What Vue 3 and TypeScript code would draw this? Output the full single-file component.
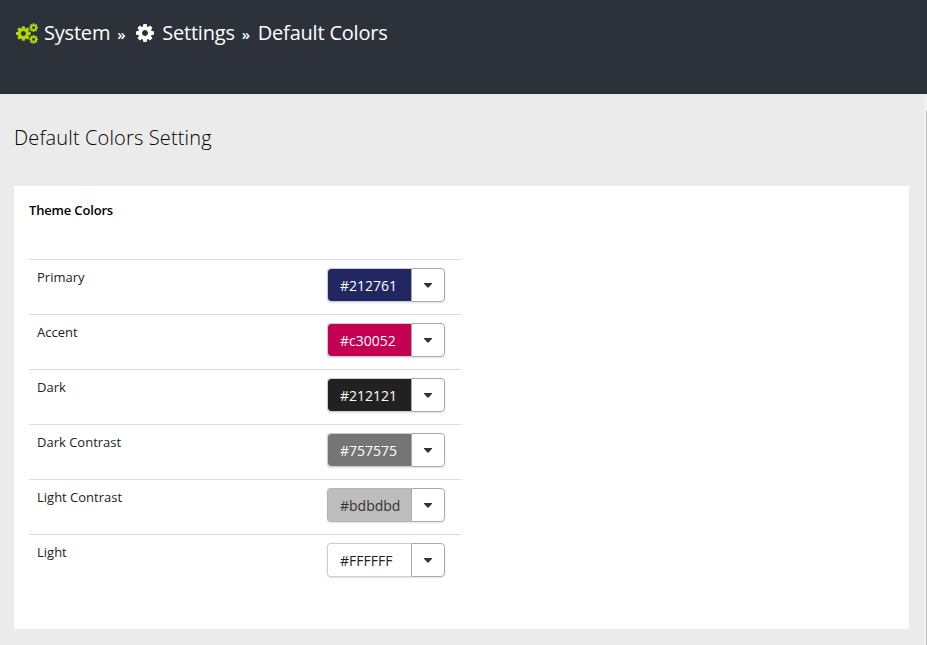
<script setup lang="ts">
interface ThemeColor {
  label: string
  value: string
  tone: string
}

const colors: ThemeColor[] = [
  { label: 'Primary', value: '#212761', tone: 'primary' },
  { label: 'Accent', value: '#c30052', tone: 'accent' },
  { label: 'Dark', value: '#212121', tone: 'dark' },
  { label: 'Dark Contrast', value: '#757575', tone: 'dark-contrast' },
  { label: 'Light Contrast', value: '#bdbdbd', tone: 'light-contrast' },
  { label: 'Light', value: '#FFFFFF', tone: 'light' },
]

const cog =
  'M1024 640q0 106-75 181t-181 75-181-75-75-181 75-181 181-75 181 75 75 181zm512-109v222q0 12-8 23t-20 13l-185 28q-19 54-39 91 35 50 107 138 10 12 10 25t-9 23q-27 37-99 108t-94 71q-12 0-26-9l-138-108q-44 23-91 38-16 136-29 186-7 28-36 28h-222q-14 0-24.5-8.5t-11.5-21.5l-28-184q-49-16-90-37l-141 107q-10 9-25 9-14 0-25-11-126-114-165-168-7-10-7-23 0-12 8-23 15-21 51-66.5t54-70.5q-27-50-41-99l-183-27q-13-2-21-12.5t-8-23.5v-222q0-12 8-23t19-13l186-28q14-46 39-92-40-57-107-138-10-12-10-24 0-10 9-23 26-36 98.5-107.5t94.5-71.5q13 0 26 10l138 107q44-23 91-38 16-136 29-186 7-28 36-28h222q14 0 24.5 8.5t11.5 21.5l28 184q49 16 90 37l142-107q9-9 24-9 13 0 25 10 129 119 165 170 7 8 7 22 0 12-8 23-15 21-51 66.5t-54 70.5q26 50 41 98l183 28q13 2 21 12.5t8 23.5z'
</script>

<template>
  <div class="page">
    <header class="topbar">
      <svg class="cogs" viewBox="0 0 1920 1792">
        <path :d="cog" transform="translate(0 363) scale(.8333)" />
        <path :d="cog" transform="translate(1152 64) scale(.5)" />
        <path :d="cog" transform="translate(1152 1088) scale(.5)" />
      </svg>
      <span class="crumb">System</span>
      <span class="sep">»</span>
      <svg class="cog" viewBox="0 -128 1536 1536"><path :d="cog" /></svg>
      <span class="crumb">Settings</span>
      <span class="sep last">»</span>
      <span class="crumb">Default Colors</span>
    </header>
    <div class="body">
      <main class="content">
        <h1>Default Colors Setting</h1>
        <section class="panel">
          <h2>Theme Colors</h2>
          <div class="rows">
            <div v-for="c in colors" :key="c.label" class="row">
              <span class="label">{{ c.label }}</span>
              <div class="picker">
                <button type="button" class="value" :class="c.tone">{{ c.value }}</button>
                <button type="button" class="toggle">
                  <svg viewBox="0 0 8 5"><path d="M0 0h8v.8L4.6 4.5H3.4L0 .8z" /></svg>
                </button>
              </div>
            </div>
          </div>
        </section>
      </main>
      <div class="scroll"><div class="thumb"></div></div>
    </div>
  </div>
</template>

<style>
body {
  background: #ebebeb;
  overflow: hidden;
}
</style>

<style scoped>
.page {
  box-sizing: border-box;
  height: 645px;
  display: flex;
  flex-direction: column;
  background: #ebebeb;
  color: #222;
  font-family: "Open Sans", "Noto Sans", sans-serif;
}
.topbar {
  box-sizing: border-box;
  flex: none;
  height: 94px;
  padding: 18px 0 0 16px;
  display: flex;
  align-items: flex-start;
  background: #2d323a;
  border-bottom: 1px solid #292d34;
  color: #fff;
  font-size: 20px;
  line-height: 30px;
}
.crumb {
  letter-spacing: -0.2px;
}
.cogs {
  width: 22px;
  height: 21px;
  margin: 5px 6px 0 0;
  fill: #b2d60a;
  fill-rule: evenodd;
}
.cog {
  width: 18px;
  height: 18px;
  margin: 6px 8px 0 0;
  fill: #fff;
  fill-rule: evenodd;
}
.sep {
  width: 9px;
  margin: 1px 10px 0 7px;
  font-size: 15px;
  font-weight: 600;
}
.sep.last {
  margin-right: 7px;
}
.body {
  flex: 1;
  display: flex;
}
.content {
  flex: 1;
  padding: 30px 15px 0 14px;
}
h1 {
  margin: 0 0 34px;
  font-size: 20px;
  line-height: 28px;
  font-weight: 300;
  letter-spacing: 0.14px;
  color: #000;
}
.panel {
  box-sizing: border-box;
  height: 443px;
  padding: 14px 15px;
  background: #fff;
}
h2 {
  margin: 0 0 39px;
  font-size: 13px;
  line-height: 20px;
  font-weight: 600;
  letter-spacing: -0.17px;
  color: #000;
}
.rows {
  width: 432px;
}
.row {
  box-sizing: border-box;
  height: 55px;
  padding: 8px 16px 0 8px;
  display: flex;
  justify-content: space-between;
  align-items: flex-start;
  border-top: 1px solid #ddd;
}
.label {
  font-size: 13px;
  line-height: 18px;
}
.picker {
  display: flex;
  width: 118px;
  height: 34px;
  border-radius: 4px;
  box-shadow: 0 1px 2px rgba(0, 0, 0, 0.12);
}
button {
  box-sizing: border-box;
  margin: 0;
  font-family: inherit;
}
.value {
  width: 84px;
  padding: 2px 0 0 12px;
  text-align: left;
  border: 1px solid #ccc;
  border-right: 0;
  border-radius: 4px 0 0 4px;
  font-size: 14px;
  line-height: 20px;
  color: #fff;
  background-clip: padding-box;
}
.toggle {
  width: 34px;
  padding: 0;
  display: flex;
  align-items: center;
  justify-content: center;
  border: 1px solid #aaa;
  border-radius: 0 4px 4px 0;
  background: #fff;
}
.toggle svg {
  width: 8px;
  height: 5px;
  fill: #333;
}
.primary { background-color: #212761; }
.accent { background-color: #c30052; }
.dark { background-color: #212121; }
.dark-contrast { background-color: #757575; }
.light-contrast { background-color: #bdbdbd; border-color: #b3b3b3; color: #333; }
.light { background-color: #fff; color: #222; }
.scroll {
  width: 3px;
  padding: 17px 0 0 2px;
  box-sizing: border-box;
  display: flex;
  background: #f1f1f1;
}
.thumb {
  flex: 1;
  background: #c1c1c1;
}
</style>
